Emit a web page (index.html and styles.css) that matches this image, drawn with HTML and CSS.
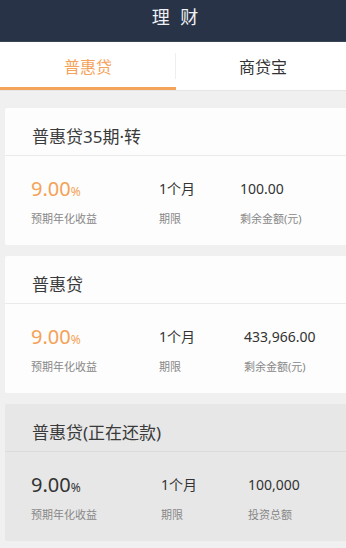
FILE: index.html
```html
<!DOCTYPE html>
<html lang="zh-CN">
<head>
<meta charset="utf-8">
<title>理财</title>
<link rel="stylesheet" href="styles.css">
</head>
<body>
<div class="app">
  <header class="topbar">理 财</header>
  <nav class="tabs">
    <div class="tab tab--active">普惠贷</div>
    <div class="tab">商贷宝</div>
  </nav>
  <main class="list">
    <section class="card">
      <div class="card__title">普惠贷35期·转</div>
      <div class="stats stats--a">
        <div class="stat">
          <div class="stat__value rate">9.00<span class="pct">%</span></div>
          <div class="stat__label">预期年化收益</div>
        </div>
        <div class="stat">
          <div class="stat__value">1个月</div>
          <div class="stat__label">期限</div>
        </div>
        <div class="stat">
          <div class="stat__value">100.00</div>
          <div class="stat__label">剩余金额(元)</div>
        </div>
      </div>
    </section>
    <section class="card">
      <div class="card__title">普惠贷</div>
      <div class="stats stats--b">
        <div class="stat">
          <div class="stat__value rate">9.00<span class="pct">%</span></div>
          <div class="stat__label">预期年化收益</div>
        </div>
        <div class="stat">
          <div class="stat__value">1个月</div>
          <div class="stat__label">期限</div>
        </div>
        <div class="stat">
          <div class="stat__value">433,966.00</div>
          <div class="stat__label">剩余金额(元)</div>
        </div>
      </div>
    </section>
    <section class="card card--done">
      <div class="card__title">普惠贷(正在还款)</div>
      <div class="stats stats--c">
        <div class="stat">
          <div class="stat__value rate rate--muted">9.00<span class="pct">%</span></div>
          <div class="stat__label">预期年化收益</div>
        </div>
        <div class="stat">
          <div class="stat__value">1个月</div>
          <div class="stat__label">期限</div>
        </div>
        <div class="stat">
          <div class="stat__value">100,000</div>
          <div class="stat__label">投资总额</div>
        </div>
      </div>
    </section>
  </main>
</div>
</body>
</html>
```

FILE: styles.css
```css
html, body {
  margin: 0;
  padding: 0;
}
body {
  background: #f0f0f0;
  font-family: "Noto Sans", "Noto Sans CJK SC", sans-serif;
  color: #333;
  overflow: hidden;
}
.app {
  width: 350px;
  min-height: 548px;
  background: #f0f0f0;
}
.topbar {
  height: 42px;
  box-sizing: border-box;
  padding-top: 5px;
  padding-left: 3px;
  line-height: 24px;
  font-size: 18px;
  letter-spacing: 3px;
  text-align: center;
  color: #eef0f3;
  background: #283347;
  border-bottom: 1px solid #3a4457;
}
.tabs {
  display: flex;
  background: #fff;
  border-bottom: 1px solid #e6e6e6;
}
.tab {
  flex: 1;
  position: relative;
  padding-top: 15px;
  padding-bottom: 10px;
  line-height: 20px;
  font-size: 16px;
  text-align: center;
  color: #333;
  border-bottom: 3px solid transparent;
}
.tab--active {
  flex: 0 0 176px;
  color: #f5a35b;
  border-bottom-color: #f5a35b;
}
.tab--active::after {
  content: "";
  position: absolute;
  right: 0;
  top: 11px;
  width: 1px;
  height: 26px;
  background: #eeeeee;
}
.list {
  padding-top: 17px;
  display: flex;
  flex-direction: column;
  gap: 11px;
}
.card {
  margin: 0 0 0 5px;
  background: #fdfdfd;
  border-radius: 2px;
}
.card--done {
  background: #e7e7e7;
}
.card__title {
  padding: 19px 0 8px 27px;
  line-height: 20px;
  font-size: 17px;
  color: #3a3a3a;
  border-bottom: 1px solid #ebebeb;
}
.card--done .card__title {
  border-bottom-color: #dcdcdc;
}
.stats {
  display: grid;
  padding: 21px 0 19px 26px;
}
.stats--a { grid-template-columns: 128px 81px 1fr; }
.stats--b { grid-template-columns: 128px 85px 1fr; }
.stats--c { grid-template-columns: 130px 87px 1fr; }
.stat__value {
  height: 24px;
  line-height: 24px;
  font-size: 14px;
  color: #333;
  white-space: nowrap;
}
.rate {
  font-size: 20px;
  color: #f4a257;
}
.rate--muted {
  color: #333;
}
.pct {
  font-size: 12px;
}
.stat__label {
  margin-top: 11px;
  line-height: 14px;
  font-size: 11px;
  color: #888;
  white-space: nowrap;
}
```
